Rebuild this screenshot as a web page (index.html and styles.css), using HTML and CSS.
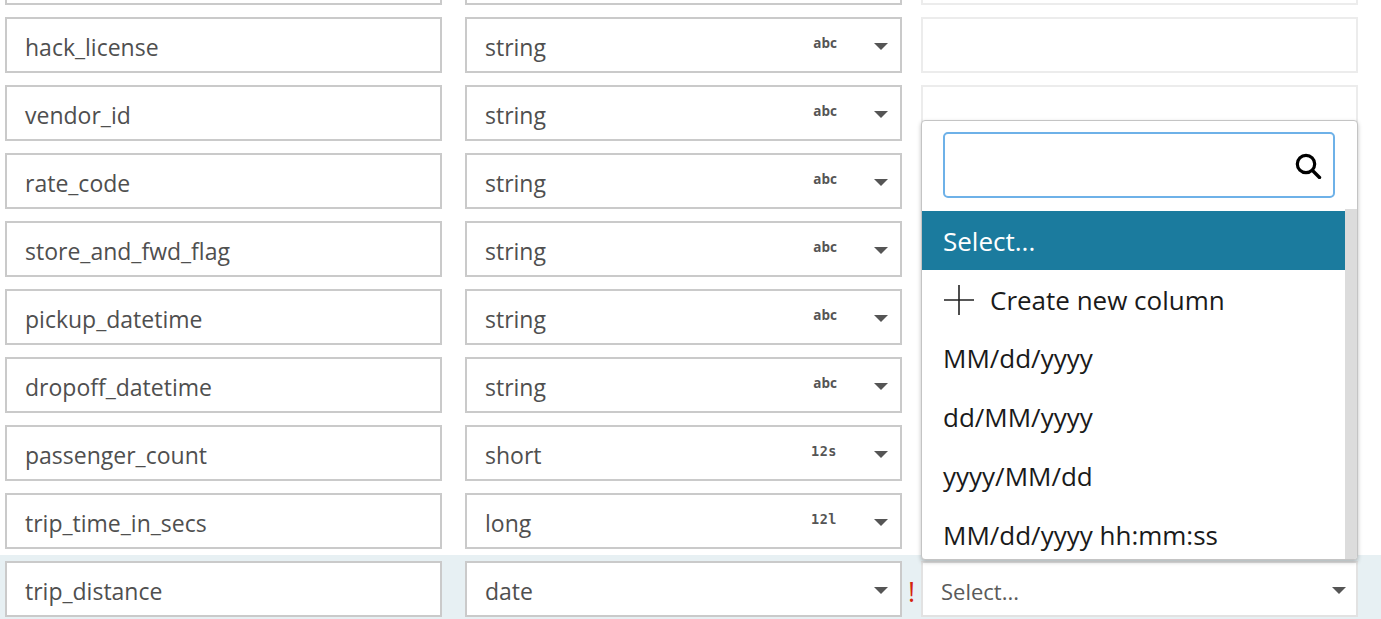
FILE: index.html
```html
<!DOCTYPE html>
<html>
<head>
<meta charset="utf-8">
<link rel="stylesheet" href="styles.css">
</head>
<body>
<div class="rows">
  <div class="row">
    <div class="box name"></div><span></span>
    <div class="box type"></div><span></span>
    <div class="box empty"></div>
  </div>
  <div class="row">
    <div class="box name">hack_license</div><span></span>
    <div class="box type"><span class="tname">string</span><span class="badge">abc</span><span class="caret"></span></div><span></span>
    <div class="box empty"></div>
  </div>
  <div class="row">
    <div class="box name">vendor_id</div><span></span>
    <div class="box type"><span class="tname">string</span><span class="badge">abc</span><span class="caret"></span></div><span></span>
    <div class="box empty"></div>
  </div>
  <div class="row">
    <div class="box name">rate_code</div><span></span>
    <div class="box type"><span class="tname">string</span><span class="badge">abc</span><span class="caret"></span></div><span></span>
    <div class="box empty"></div>
  </div>
  <div class="row">
    <div class="box name">store_and_fwd_flag</div><span></span>
    <div class="box type"><span class="tname">string</span><span class="badge">abc</span><span class="caret"></span></div><span></span>
    <div class="box empty"></div>
  </div>
  <div class="row">
    <div class="box name">pickup_datetime</div><span></span>
    <div class="box type"><span class="tname">string</span><span class="badge">abc</span><span class="caret"></span></div><span></span>
    <div class="box empty"></div>
  </div>
  <div class="row">
    <div class="box name">dropoff_datetime</div><span></span>
    <div class="box type"><span class="tname">string</span><span class="badge">abc</span><span class="caret"></span></div><span></span>
    <div class="box empty"></div>
  </div>
  <div class="row">
    <div class="box name">passenger_count</div><span></span>
    <div class="box type"><span class="tname">short</span><span class="badge mono">12s</span><span class="caret"></span></div><span></span>
    <div class="box empty"></div>
  </div>
  <div class="row">
    <div class="box name">trip_time_in_secs</div><span></span>
    <div class="box type"><span class="tname">long</span><span class="badge mono">12l</span><span class="caret"></span></div><span></span>
    <div class="box empty"></div>
  </div>
  <div class="row active">
    <div class="box name">trip_distance</div><span></span>
    <div class="box type"><span class="tname">date</span><span class="caret"></span></div>
    <span class="warn">!</span>
    <div class="fmt-cell">
      <div class="box select"><span class="tname">Select...</span><span class="caret"></span></div>
      <div class="dropdown">
        <div class="search">
          <svg width="28" height="28" viewBox="0 0 28 28"><circle cx="12" cy="13" r="8.7" fill="none" stroke="#000" stroke-width="3.2"/><line x1="18.5" y1="19.5" x2="25.5" y2="26.5" stroke="#000" stroke-width="3.4" stroke-linecap="round"/></svg>
        </div>
        <div class="list">
          <div class="items">
            <div class="item selected">Select...</div>
            <div class="item"><svg class="plus" width="32" height="32" viewBox="0 0 32 32"><path d="M16 1v30M1 16h30" stroke="#222" stroke-width="1.6" fill="none"/></svg>Create new column</div>
            <div class="item">MM/dd/yyyy</div>
            <div class="item">dd/MM/yyyy</div>
            <div class="item">yyyy/MM/dd</div>
            <div class="item">MM/dd/yyyy hh:mm:ss</div>
          </div>
          <div class="scroll"></div>
        </div>
      </div>
    </div>
  </div>
</div>
</body>
</html>
```
FILE: styles.css
```css
html, body {
  margin: 0;
  padding: 0;
  background: #fff;
  overflow: hidden;
  height: 619px;
}
body {
  font-family: "Open Sans", "Noto Sans", sans-serif;
  color: #4f4f4f;
}
.rows {
  margin-top: -57px;
}
.row {
  display: grid;
  grid-template-columns: 437px 23px 437px 19px 437px;
  padding: 6px 0 6px 5px;
  height: 56px;
}
.row.active {
  background: #e7f0f3;
}
.box {
  box-sizing: border-box;
  height: 56px;
  border: 2px solid #cacaca;
  background: #fff;
  display: flex;
  align-items: center;
  padding: 3px 12px 0 18px;
  font-size: 23px;
  white-space: nowrap;
}
.box.empty {
  border-color: #ececec;
}
.tname {
  flex: 1;
}
.badge {
  font-family: "Open Sans", sans-serif;
  font-weight: 700;
  font-size: 13.5px;
  color: #555;
  margin-right: 37px;
  margin-top: -8px;
}
.badge.mono {
  font-family: "DejaVu Sans Mono", monospace;
  font-size: 13.5px;
  letter-spacing: 0.5px;
}
.caret {
  width: 0;
  height: 0;
  border-left: 7px solid transparent;
  border-right: 7px solid transparent;
  border-top: 7px solid #555;
  margin-right: 0;
}
.warn {
  color: #d4240c;
  font-size: 27px;
  padding-left: 6px;
  padding-top: 4px;
  align-self: center;
  font-family: "Open Sans", sans-serif;
  font-weight: 400;
}
.fmt-cell {
  position: relative;
}
.box.select {
  border-color: #e2e2e2;
  color: #5a5a5a;
  font-size: 22px;
  padding-left: 18px;
  padding-right: 10px;
}
.dropdown {
  position: absolute;
  left: 0;
  bottom: calc(100% + 1px);
  width: 437px;
  height: 440px;
  box-sizing: border-box;
  background: #fff;
  border: 1px solid #c4c4c4;
  border-radius: 4px;
  box-shadow: 0 2px 4px rgba(0,0,0,0.25);
  display: flex;
  flex-direction: column;
  overflow: hidden;
}
.search {
  margin: 11px 22px 0 21px;
  height: 66px;
  box-sizing: border-box;
  border: 2px solid #6eb1e8;
  border-radius: 5px;
  display: flex;
  align-items: center;
  justify-content: flex-end;
  padding-right: 11px;
  flex: none;
}
.list {
  margin-top: 11px;
  display: flex;
  flex: 1;
  min-height: 0;
}
.items {
  flex: 1;
  padding-top: 2px;
  overflow: hidden;
}
.scroll {
  width: 12px;
  background: #dcdcdc;
}
.item {
  height: 58.8px;
  display: flex;
  align-items: center;
  padding-left: 21px;
  padding-top: 1px;
  box-sizing: border-box;
  font-size: 26px;
  color: #1a1a1a;
  white-space: nowrap;
}
.item.selected {
  background: #1b7b9e;
  color: #fff;
}
.plus {
  margin-right: 15px;
}
```
